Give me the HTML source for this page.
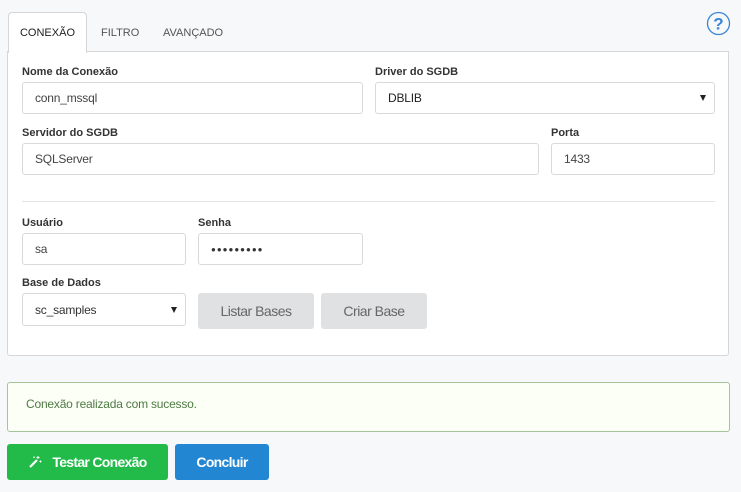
<!DOCTYPE html>
<html><head><meta charset="utf-8"><style>
*{box-sizing:border-box;margin:0;padding:0}
body{width:741px;height:492px;background:#f7f8fa;font-family:"Liberation Sans",sans-serif;position:relative;overflow:hidden;color:#333}
.a{position:absolute}
.panel{left:7px;top:51px;width:722px;height:305px;background:#fff;border:1px solid #d6d6d6;border-radius:0 0 3px 3px}
.tab{top:12px;left:8px;width:79px;height:41px;background:#fff;border:1px solid #d6d6d6;border-bottom:none;border-radius:4px 4px 0 0;font-size:11px;line-height:40px;text-align:center;color:#222;z-index:2}
.t{font-size:11px;color:#555;top:27px}
.lbl{font-size:11px;font-weight:bold;color:#333}
.in{background:#fff;border:1px solid #d9d9d9;border-radius:3px;font-size:12px;color:#444;padding-left:12px;display:flex;align-items:center;letter-spacing:-0.2px}
.arr{position:absolute;right:8px;top:50%;margin-top:-3px;border-left:3.5px solid transparent;border-right:3.5px solid transparent;border-top:6px solid #222}
.gb{background:#e0e1e3;border-radius:3px;font-size:14px;color:#666;display:flex;align-items:center;justify-content:center;letter-spacing:-0.5px}
</style></head><body>
<div class="a panel"></div>
<div class="a tab">CONEXÃO</div>
<div class="a t" style="left:101px">FILTRO</div>
<div class="a t" style="left:163px">AVANÇADO</div>
<svg class="a" style="left:706px;top:11px" width="25" height="25" viewBox="0 0 25 25"><circle cx="12.5" cy="12.5" r="11" fill="none" stroke="#3a86d6" stroke-width="1.3"/><text x="12.5" y="18.5" text-anchor="middle" font-family="Liberation Sans" font-weight="bold" font-size="17" fill="#3a86d6">?</text></svg>

<div class="a lbl" style="left:22px;top:66px">Nome da Conexão</div>
<div class="a in" style="left:22px;top:82px;width:341px;height:32px">conn_mssql</div>
<div class="a lbl" style="left:375px;top:66px">Driver do SGDB</div>
<div class="a in" style="left:375px;top:82px;width:340px;height:32px;color:#222">DBLIB<span class="arr"></span></div>

<div class="a lbl" style="left:22px;top:127px">Servidor do SGDB</div>
<div class="a in" style="left:22px;top:143px;width:517px;height:32px">SQLServer</div>
<div class="a lbl" style="left:551px;top:127px">Porta</div>
<div class="a in" style="left:551px;top:143px;width:164px;height:32px">1433</div>

<div class="a" style="left:22px;top:201px;width:693px;height:1px;background:#e3e3e3"></div>

<div class="a lbl" style="left:22px;top:217px">Usuário</div>
<div class="a in" style="left:22px;top:233px;width:164px;height:32px">sa</div>
<div class="a lbl" style="left:198px;top:217px">Senha</div>
<div class="a in" style="left:198px;top:233px;width:165px;height:32px;font-size:8px;letter-spacing:1px;color:#333">●●●●●●●●●</div>

<div class="a lbl" style="left:22px;top:277px">Base de Dados</div>
<div class="a in" style="left:22px;top:293px;width:164px;height:33px;color:#333">sc_samples<span class="arr"></span></div>
<div class="a gb" style="left:198px;top:293px;width:116px;height:36px">Listar Bases</div>
<div class="a gb" style="left:321px;top:293px;width:106px;height:36px">Criar Base</div>

<div class="a" style="left:7px;top:382px;width:723px;height:50px;background:#fbfff5;border:1px solid #a6c49a;border-radius:3px;font-size:12px;color:#4f7a45;padding:14px 0 0 18px;letter-spacing:-0.2px">Conexão realizada com sucesso.</div>

<div class="a" style="left:7px;top:444px;width:161px;height:36px;background:#22bb4a;border-radius:3px;color:#fff;font-size:14px;font-weight:bold;display:flex;align-items:center;justify-content:center;letter-spacing:-0.7px">
<svg width="14" height="14" viewBox="0 0 14 14" style="margin-right:10px"><path d="M2 12 L9 5" stroke="#fff" stroke-width="2.2"/><path d="M10 1v3M8.5 2.5h3M12.5 5.5v2M11.5 6.5h2M6 1.5v1.5M5.3 2.2h1.5" stroke="#fff" stroke-width="1"/></svg>Testar Conexão</div>
<div class="a" style="left:175px;top:444px;width:94px;height:36px;background:#2386d3;border-radius:3px;color:#fff;font-size:14px;font-weight:bold;display:flex;align-items:center;justify-content:center;letter-spacing:-0.7px">Concluir</div>
</body></html>
